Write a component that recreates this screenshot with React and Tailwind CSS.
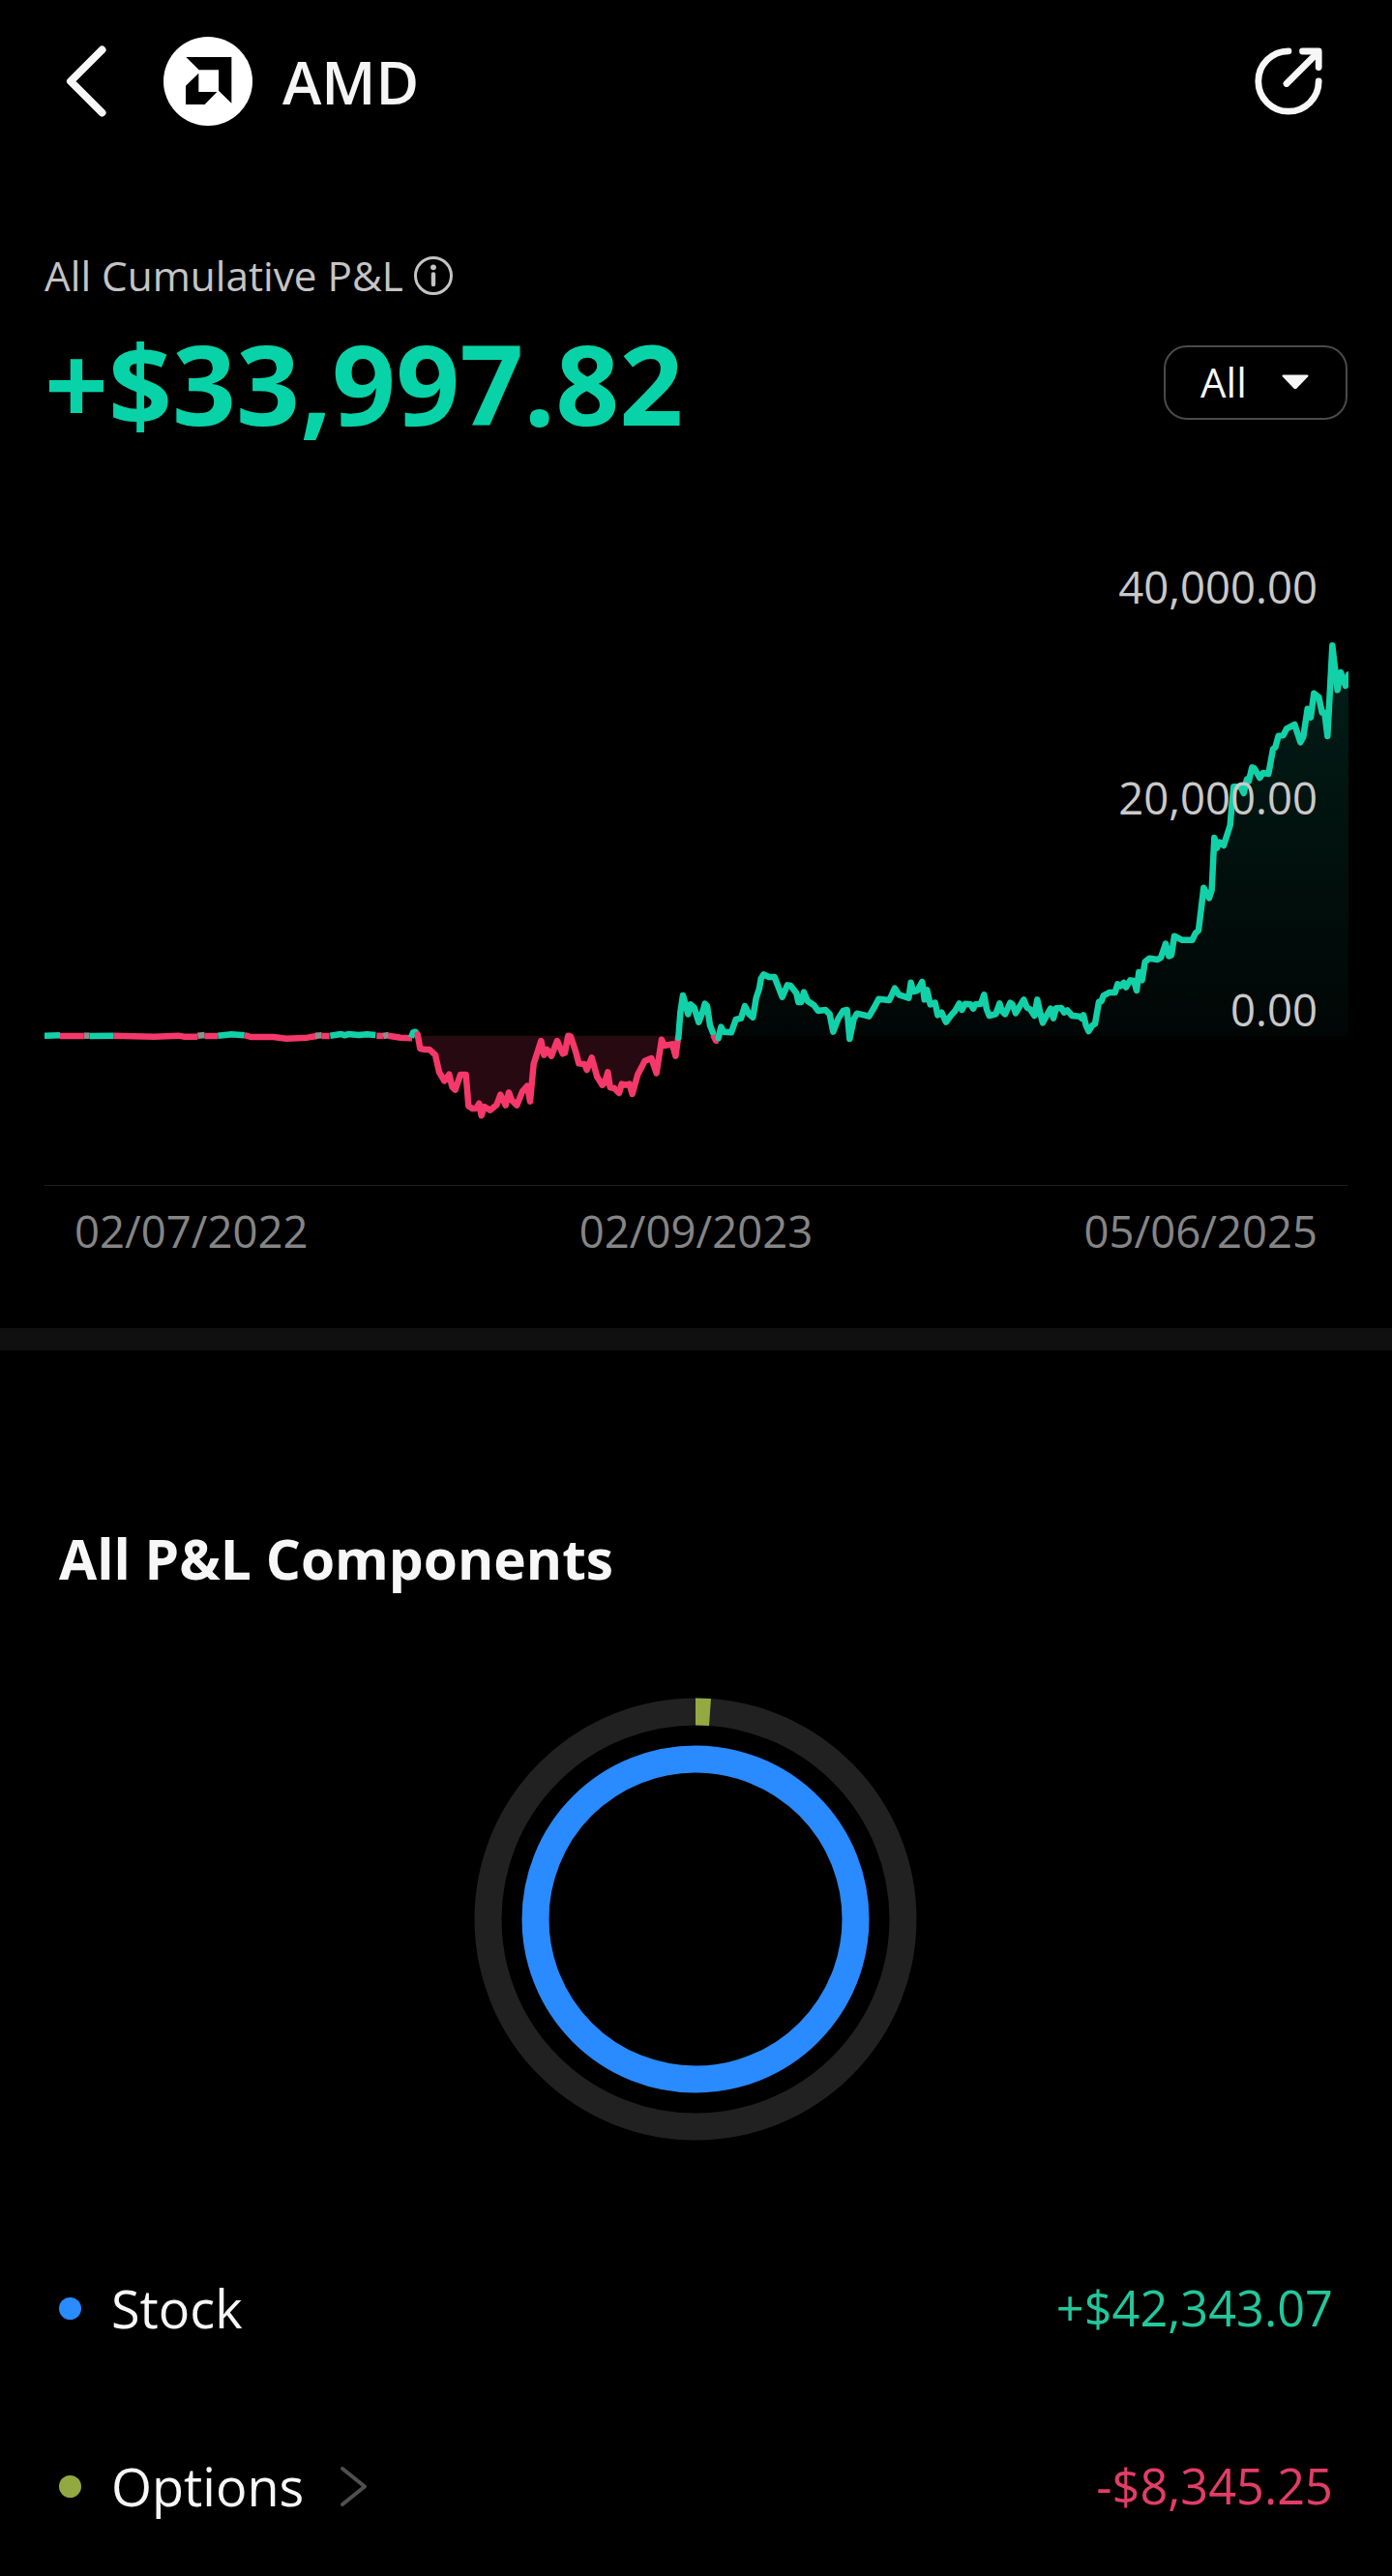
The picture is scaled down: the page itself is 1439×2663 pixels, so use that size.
// Chart units: 3 per pixel, zero line sits at y = 1532
const ZERO = 1532;

const shift = (dx, dy, points) => points.map(([x, y]) => [x + dx, y + dy]);

const FLAT = [
  { tone: 'up', points: [[0, 1532], [48, 1531]] },
  { tone: 'down', points: [[48, 1533], [122, 1533]] },
  { tone: 'mid', points: [[122, 1532], [140, 1532]] },
  { tone: 'up', points: [[140, 1533], [215, 1532]] },
  { tone: 'down', points: [[215, 1532], [340, 1535], [415, 1532], [432, 1535], [475, 1535]] },
  { tone: 'mid', points: [[475, 1532], [497, 1530]] },
  { tone: 'down', points: [[497, 1533], [538, 1533]] },
  { tone: 'up', points: [[538, 1532], [580, 1528], [620, 1531]] },
  { tone: 'down', points: [[620, 1530], [640, 1536], [710, 1536], [750, 1541], [815, 1538], [845, 1533]] },
  { tone: 'mid', points: [[840, 1532], [860, 1531]] },
  { tone: 'down', points: [[860, 1533], [884, 1533]] },
  { tone: 'up', points: [[886, 1532], [920, 1527], [932, 1531], [942, 1527], [975, 1530], [1000, 1528], [1027, 1530]] },
  { tone: 'down', points: [[1030, 1532], [1050, 1533]] },
  { tone: 'mid', points: [[1050, 1533], [1068, 1530]] },
  { tone: 'down', points: [[1066, 1532], [1105, 1538], [1140, 1540]] },
];

const LOSS = [
  [1157, 1528], [1165, 1572], [1180, 1575], [1194, 1575], [1212, 1592], [1224, 1645], [1240, 1672], [1255, 1652],
  [1264, 1690], [1274, 1700], [1290, 1653], [1307, 1653], [1315, 1750], [1327, 1758], [1339, 1757], [1348, 1742],
  [1355, 1780], [1364, 1752], [1382, 1763], [1402, 1747], [1414, 1715], [1430, 1748], [1440, 1708], [1449, 1732],
  [1465, 1748], [1482, 1705], [1497, 1688], [1506, 1736], [1517, 1620], [1540, 1548], [1549, 1592], [1559, 1575],
  [1572, 1595], [1590, 1548], [1607, 1588], [1614, 1585], [1624, 1532], [1632, 1535], [1647, 1580], [1657, 1618],
  [1674, 1620], [1682, 1638], [1697, 1600], [1714, 1660], [1730, 1685], [1737, 1678], [1747, 1645], [1754, 1692],
  [1767, 1695], [1782, 1710], [1790, 1682], [1802, 1685], [1814, 1682], [1823, 1713], [1840, 1652], [1862, 1610],
  [1882, 1602], [1898, 1648], [1914, 1544], [1922, 1563], [1947, 1558], [1957, 1595], [1965, 1540],
];

const REBOUND = shift(1902, 1260, [
  [64, 278], [70, 200], [78, 147], [86, 175], [94, 205], [102, 175], [113, 185], [127, 230], [140, 195], [146, 173],
  [153, 180], [162, 240], [172, 265],
]);

const DIP = shift(1902, 1260, [[172, 270], [180, 287], [188, 287]]);

const GAIN = [
  ...shift(1902, 1260, [
    [188, 280], [196, 245], [205, 260], [228, 262], [242, 222], [258, 218], [270, 180], [283, 205], [295, 215],
    [305, 155], [315, 125], [320, 95], [328, 82], [345, 90], [362, 90], [386, 152], [402, 115], [412, 117],
    [430, 140], [436, 168], [445, 168], [453, 137], [465, 165], [485, 178], [497, 195], [520, 192], [533, 205],
    [544, 260], [560, 218], [575, 195], [587, 192], [595, 282], [608, 220], [618, 203], [655, 212], [672, 183],
    [685, 158], [718, 162], [735, 125], [748, 145], [778, 155], [785, 107], [792, 135], [805, 132], [820, 105],
    [827, 160], [835, 130], [845, 175], [860, 170], [868, 208], [880, 200], [894, 230], [910, 208], [922, 195],
    [935, 172], [943, 192], [953, 173], [970, 175], [978, 188], [985, 175], [1002, 173], [1012, 145], [1020, 190],
    [1028, 210], [1048, 205], [1060, 172], [1067, 195], [1077, 205], [1093, 170], [1100, 175], [1110, 202],
    [1135, 160], [1145, 185], [1155, 190], [1168, 210], [1177, 160], [1187, 205], [1194, 232],
  ]),
  ...shift(3102, 0, [
    [0, 1480], [18, 1448], [27, 1478], [35, 1447], [52, 1446], [60, 1460], [70, 1453], [85, 1470], [108, 1472],
    [115, 1478], [120, 1468], [128, 1500], [136, 1518], [148, 1500], [156, 1495], [168, 1427], [176, 1425],
    [182, 1408], [200, 1398], [218, 1398], [226, 1372], [235, 1378], [245, 1368], [252, 1382], [265, 1360],
    [277, 1362], [285, 1392], [292, 1335], [302, 1360], [311, 1303], [325, 1292], [350, 1296], [360, 1290],
    [375, 1247], [385, 1285], [393, 1282], [402, 1223], [425, 1235], [458, 1235], [467, 1215], [477, 1205],
    [485, 1140], [493, 1073], [510, 1105], [518, 1080], [526, 918], [534, 950], [542, 932], [555, 942],
    [575, 880], [580, 820], [586, 760], [608, 760], [617, 780], [627, 737], [633, 742], [643, 700], [650, 703],
    [667, 732], [677, 717], [694, 720], [708, 643], [715, 638], [725, 602], [740, 600], [750, 580], [775, 567],
    [793, 622], [802, 605], [815, 518], [825, 545], [835, 470], [850, 482], [860, 530], [868, 530], [877, 603],
    [892, 322], [908, 460], [918, 405], [933, 447], [942, 412],
  ]),
];

const SEGMENTS = [
  ...FLAT,
  { tone: 'up', points: [[1137, 1538], [1143, 1522], [1150, 1520], [1155, 1526]] },
  { tone: 'down', points: LOSS },
  { tone: 'up', points: REBOUND },
  { tone: 'down', points: DIP },
  { tone: 'up', points: GAIN },
];

const TONES = { up: '#12d1a8', down: '#f5386a', mid: '#8d8f88' };

const toPoints = (points) => points.map((p) => p.join(',')).join(' ');

const toArea = (points) => {
  const first = points[0];
  const last = points[points.length - 1];
  return toPoints([[first[0], ZERO], ...points, [last[0], ZERO]]);
};

const ROWS = [
  { label: 'Stock', value: '+$42,343.07', dot: 'bg-[#2a8aff]', color: 'text-[#22c79c]' },
  { label: 'Options', value: '-$8,345.25', dot: 'bg-[#92a942]', color: 'text-[#e23d66]', more: true },
];

const AmdLogo = () => (
  <svg viewBox="0 0 276 276" className="w-[92px] h-[92px] shrink-0">
    <circle cx="138" cy="138" r="138" fill="#fff" />
    <path d="M70 63H211V206L171 167V103H110Z" fill="#000" />
    <path d="M69 152L109 113V171H166L128 210H69Z" fill="#000" />
  </svg>
);

const ShareIcon = () => (
  <svg viewBox="0 0 72 72" className="w-[72px] h-[72px]" fill="none" stroke="#f7f7f7" strokeWidth="6.8" strokeLinecap="round" strokeLinejoin="round">
    <path d="M36 4.8A31.2 31.2 0 1 0 67.2 36" />
    <path d="M34 38.5L66 6.5" />
    <path d="M50.5 5H67.2V21.5" />
  </svg>
);

const Header = () => (
  <header className="flex items-center h-[168px] pl-[66px] pr-[71px]">
    <svg viewBox="0 0 46 76" className="w-[46px] h-[76px]" fill="none" stroke="#f7f7f7" strokeWidth="8" strokeLinecap="round" strokeLinejoin="round">
      <path d="M39.5 5.5L7 38L39.5 70.5" />
    </svg>
    <div className="ml-[57px]">
      <AmdLogo />
    </div>
    <h1 className="ml-[31px] flex-1 text-[61px] leading-none font-semibold text-[#f5f5f5]">AMD</h1>
    <ShareIcon />
  </header>
);

const PnlChart = () => (
  <div className="relative h-[666px] mt-[125px] border-b border-[#1f1f1f]">
    <svg viewBox="0 0 4044 1992" className="w-[1348px] h-[664px]" fill="none">
      <defs>
        <linearGradient id="gain" gradientUnits="userSpaceOnUse" x1="0" y1="320" x2="0" y2={ZERO}>
          <stop offset="0" stopColor="#12d1a8" stopOpacity="0.14" />
          <stop offset="1" stopColor="#12d1a8" stopOpacity="0.03" />
        </linearGradient>
      </defs>
      <polygon points={toArea(REBOUND)} fill="url(#gain)" />
      <polygon points={toArea(GAIN)} fill="url(#gain)" />
      <polygon points={toArea(LOSS)} fill="#f5386a" fillOpacity="0.155" />
      {SEGMENTS.map((s, i) => (
        <polyline
          key={i}
          points={toPoints(s.points)}
          stroke={TONES[s.tone]}
          strokeWidth="19.5"
          strokeLinejoin="round"
          strokeLinecap={s.points.length > 10 ? 'round' : 'butt'}
        />
      ))}
    </svg>
    {/* value labels lie over the plot */}
    <div className="absolute top-[16px] right-[31px] flex flex-col items-end text-[45.5px] leading-[60px] text-[#c9c9c9]">
      <span className="h-[218px]">40,000.00</span>
      <span className="h-[219px]">20,000.00</span>
      <span>0.00</span>
    </div>
  </div>
);

const Donut = () => (
  <svg viewBox="0 0 460 460" className="w-[460px] h-[460px] mx-auto" fill="none" strokeWidth="28">
    <circle cx="230" cy="230" r="214.5" stroke="#212121" />
    <path d="M230 15.5A214.5 214.5 0 0 1 245 16.02" stroke="#93aa43" />
    <circle cx="230" cy="230" r="165.5" stroke="#2a8aff" />
  </svg>
);

const ComponentRow = ({ label, value, dot, color, more }) => (
  <div className="flex items-center h-[184px]">
    <span className={`w-[23px] h-[23px] rounded-full ${dot}`} />
    <span className="ml-[31px] text-[54px] leading-none text-[#f7f7f7]">{label}</span>
    {more && (
      <svg viewBox="0 0 30 44" className="w-[30px] h-[44px] ml-[37px]" fill="none" stroke="#4f4f4f" strokeWidth="4" strokeLinecap="round" strokeLinejoin="round">
        <path d="M3 4L26 22.5L3 41" />
      </svg>
    )}
    <span className={`ml-auto text-[50.5px] leading-none ${color}`}>{value}</span>
  </div>
);

export default function App() {
  return (
    <div className="w-[1439px] h-[2663px] overflow-hidden bg-black font-['Open_Sans','Noto_Sans',sans-serif]">
      <Header />

      <section className="px-[46px] pt-[87px]">
        <div className="flex items-center h-[60px]">
          <span className="text-[42.3px] leading-none text-[#c4c4c4]">All Cumulative P&amp;L</span>
          <svg viewBox="0 0 42 42" className="w-[42px] h-[42px] ml-[10px]" fill="none" stroke="#c4c4c4" strokeLinecap="round">
            <circle cx="21" cy="21" r="18.5" strokeWidth="3" />
            <path d="M21 19.5V30" strokeWidth="4.4" />
            <circle cx="21" cy="12.3" r="2.9" fill="#c4c4c4" stroke="none" />
          </svg>
        </div>

        <div className="flex items-center justify-between h-[80px] mt-[40px]">
          <span className="pt-[2px] text-[115.5px] leading-none font-bold text-[#08d3a8]">+$33,997.82</span>
          <button className="flex items-center w-[190px] h-[77px] pl-[36px] border-2 border-[#4a4a4a] rounded-[24px]">
            <span className="text-[42px] leading-none text-[#f7f7f7]">All</span>
            <svg viewBox="0 0 28 16" className="w-[28px] h-[16px] ml-[36px]" fill="#f7f7f7">
              <path d="M2 .5H26Q28.500 .5 27 2.500L15.500 14.500Q14 16 12.500 14.500L1 2.500Q-.5 .5 2 .5Z" />
            </svg>
          </button>
        </div>

        <PnlChart />

        <div className="flex items-center justify-between h-[93px] px-[31px] text-[45.5px] leading-none text-[#858585]">
          <span>02/07/2022</span>
          <span>02/09/2023</span>
          <span>05/06/2025</span>
        </div>
      </section>

      <div className="h-[23px] mt-[54px] bg-[#101010]" />

      <section className="px-[61px] pt-[185px]">
        <h2 className="text-[56.8px] leading-[60px] font-bold text-[#f7f7f7]">All P&amp;L Components</h2>
        <div className="mt-[113px] pr-[1px]">
          <Donut />
        </div>
        <div className="mt-[80px]">
          {ROWS.map((row) => (
            <ComponentRow key={row.label} {...row} />
          ))}
        </div>
      </section>
    </div>
  );
}
